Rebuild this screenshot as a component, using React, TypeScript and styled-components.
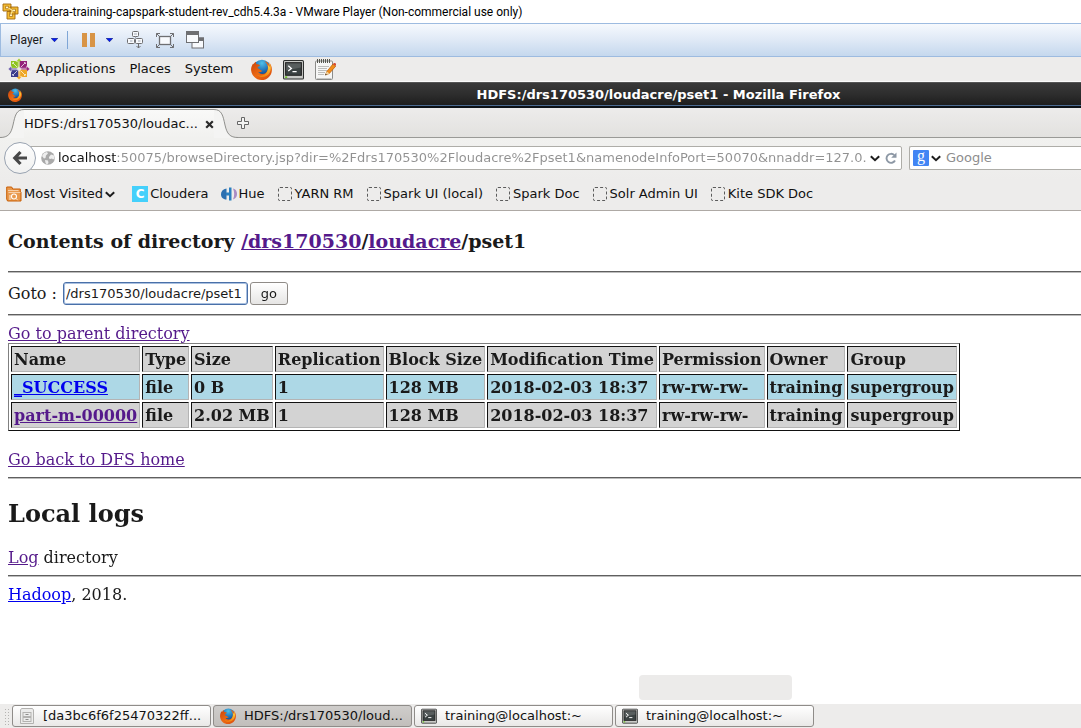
import React from "react";
import styled, { createGlobalStyle, css } from "styled-components";

const ui = `"DejaVu Sans", "Noto Sans", sans-serif`;
const segoe = `Roboto, "Noto Sans", sans-serif`;
const serif = `"DejaVu Serif", "Liberation Serif", serif`;

const GlobalStyle = createGlobalStyle`
  * { box-sizing: border-box; }
  body { margin: 0; background: #fff; color: #1a1a1a; font: 13px/18px ${ui}; }
  button, input { font: inherit; color: inherit; }
  button { cursor: default; }
  svg { display: block; flex: none; }
`;

/* ---------- layout ---------- */

const Screen = styled.div`
  display: flex;
  flex-direction: column;
  min-height: 100vh;
  overflow: hidden;
`;

const HostTitle = styled.header`
  display: flex;
  align-items: center;
  gap: 4px;
  height: 23px;
  padding: 0 2px;
  background: #fff;
  color: #000;
  font: 12px/16px ${segoe};
  white-space: nowrap;
`;

const PlayerBar = styled.div`
  display: flex;
  align-items: center;
  height: 34px;
  padding: 0 9px;
  border: 1px solid #9dbbe0;
  border-right: 0;
  background: linear-gradient(#f6f9fd, #dfe9f6 50%, #c5d8ee);
  font: 12px/16px ${segoe};
`;

const PlainButton = styled.button`
  display: flex;
  align-items: center;
  gap: 8px;
  padding: 0;
  border: 0;
  background: none;
`;

const BarDivider = styled.span`
  width: 1px;
  height: 18px;
  margin: 0 14px 0 9px;
  background: #7fa6d6;
`;

const PauseButton = styled(PlainButton)`
  gap: 11px;
`;

const ToolIcons = styled.div`
  display: flex;
  align-items: center;
  gap: 12px;
  margin-left: 14px;
`;

const GnomePanel = styled.nav`
  display: flex;
  align-items: center;
  height: 25px;
  padding: 0 8px;
  gap: 14px;
  background: #edeceb;
  border-bottom: 1px solid #fafafa;
  color: #111;
`;

const MainMenu = styled(PlainButton)`
  gap: 6px;
`;

const Launchers = styled.div`
  display: flex;
  align-items: center;
  gap: 11px;
  margin-left: 4px;
`;

const WindowTitle = styled.div`
  display: flex;
  align-items: center;
  height: 26px;
  padding-left: 8px;
  border-top: 1px solid #555;
  border-bottom: 2px solid #0c1117;
  background: linear-gradient(#393939, #2d2d2d 50%, #1c1c1c);
  box-shadow: inset 0 -1px #4b6a90;
  color: #fff;
  font-weight: bold;
`;

const WindowName = styled.h1`
  flex: 1;
  margin: 0;
  padding-left: 214px;
  font-size: 13px;
  line-height: 18px;
  text-align: center;
  white-space: nowrap;
`;

const TabStrip = styled.div`
  display: flex;
  height: 30px;
  background: linear-gradient(#edeceb, #e2e1df);
  box-shadow: inset 0 -1px #9a9a97;
`;

const Tab = styled.div`
  display: flex;
  padding-top: 1px;
`;

const TabBody = styled.div`
  display: flex;
  align-items: center;
  gap: 7px;
  border-top: 1px solid #90908d;
  background: linear-gradient(#f9f9f8, #f1f1ef);
  color: #111;
  white-space: nowrap;
`;

const NewTab = styled(PlainButton)`
  margin-left: -3px;
  padding: 2px;
`;

const NavBar = styled.div`
  display: flex;
  align-items: center;
  height: 42px;
  padding: 0 0 2px 4px;
  background: linear-gradient(#f1f1ef, #edeceb);
`;

const BackButton = styled.button`
  display: flex;
  align-items: center;
  justify-content: center;
  flex: none;
  z-index: 1;
  width: 32px;
  height: 32px;
  padding: 0;
  border: 1px solid #99a3b1;
  border-radius: 50%;
  background: linear-gradient(#fdfdfd, #f1f1f0);
`;

const Field = styled.div`
  display: flex;
  align-items: center;
  min-width: 0;
  height: 24px;
  border: 1px solid #aeada8;
  background: #fff;
`;

const UrlField = styled(Field)`
  flex: 1;
  margin: 0 7px 0 -6px;
  padding: 0 4px 0 10px;
  border-radius: 0 2px 2px 0;
`;

const SearchField = styled(Field)`
  flex: 0 0 172px;
  padding-left: 3px;
  border-right: 0;
  border-radius: 2px 0 0 2px;
`;

const bareInput = css`
  flex: 1;
  min-width: 0;
  padding: 0;
  border: 0;
  outline: 0;
  background: none;
`;

const UrlInput = styled.input`
  ${bareInput}
  margin: 0 4px 0 3px;
  background: linear-gradient(to right, #111 58px, #919191 58px);
  -webkit-background-clip: text;
  background-clip: text;
  color: transparent;
`;

const SearchInput = styled.input`
  ${bareInput}
  margin-left: 5px;
  &::placeholder { color: #8d8d8d; opacity: 1; }
`;

const SearchEngine = styled(PlainButton)`
  gap: 2px;
`;

const UrlTools = styled.div`
  display: flex;
  align-items: center;
  gap: 5px;
`;

const LetterIcon = styled.span<{ $bg: string; $serif?: boolean }>`
  flex: none;
  width: 16px;
  height: 16px;
  border-radius: ${(p) => (p.$serif ? "1px" : "0")};
  background: ${(p) => p.$bg};
  color: #fff;
  font: ${(p) => (p.$serif ? `16px/12px "Liberation Serif", serif` : `bold 12px/16px ${ui}`)};
  text-align: center;
`;

const Bookmarks = styled.nav`
  display: flex;
  align-items: center;
  gap: 12px;
  height: 31px;
  padding: 0 6px 2px;
  border-bottom: 1px solid #aea9a5;
  background: #edeceb;
  white-space: nowrap;
`;

const Bookmark = styled.a`
  display: flex;
  align-items: center;
  gap: 2px;
  color: #111;
  text-decoration: none;
`;

const FolderMark = styled(PlainButton)`
  gap: 2px;
  margin-right: 5px;
  color: #111;
`;

const Blank = styled.span`
  width: 14px;
  height: 14px;
  margin: 0 1px;
  border: 1px dashed #5c5c5c;
  border-radius: 2px;
`;

const Page = styled.main`
  flex: 1;
  padding: 0 0 8px 8px;
  font: 16px/19px ${serif};
`;

const DirHeading = styled.h2`
  margin: 19px 0;
  font-size: 19px;
  line-height: 22px;
`;

const Rule = styled.hr`
  height: 2px;
  margin: 0;
  border: 0;
  border-top: 1px solid #5f5f5f;
  background: #bdbdbd;
`;

const GotoForm = styled.form`
  display: flex;
  align-items: center;
  padding: 9px 0;
`;

const GotoInput = styled.input`
  width: 185px;
  height: 23px;
  margin: 0 2px 0 6px;
  padding: 0 2px;
  border: 1px solid #4a70a8;
  border-radius: 3px;
  outline: 0;
  box-shadow: inset 0 0 0 1px #a9c0e0;
  font: 13px/18px ${ui};
`;

const GoButton = styled.button`
  width: 38px;
  height: 23px;
  padding: 0;
  border: 1px solid #8f8b87;
  border-radius: 3px;
  background: linear-gradient(#fff, #e6e5e4);
  font: 13px/18px ${ui};
`;

const Link = styled.a<{ $fresh?: boolean }>`
  color: ${(p) => (p.$fresh ? "#0000ee" : "#551a8b")};
`;

const Line = styled.p<{ $before?: number; $after?: number }>`
  margin: ${(p) => p.$before ?? 8}px 0 ${(p) => p.$after ?? 8}px;
`;

const Listing = styled.table`
  border: 1px solid #111;
  border-top-color: #808080;
  border-left-color: #808080;
  border-spacing: 2px;
  font-weight: bold;
  line-height: 20px;
  white-space: nowrap;
`;

const Row = styled.tr<{ $bg: string }>`
  background: ${(p) => p.$bg};
`;

const cell = css`
  padding: 3px 2px 1px;
  border: 1px solid #b4b4b4;
  border-top-color: #111;
  border-left-color: #111;
  text-align: left;
`;
const HeadCell = styled.th`${cell}`;
const Cell = styled.td`${cell}`;

const LogsHeading = styled.h2`
  margin: 20px 0;
  font-size: 24px;
  line-height: 29px;
`;

const Taskbar = styled.footer`
  position: relative;
  display: flex;
  align-items: center;
  gap: 2px;
  height: 24px;
  padding: 0 4px;
  background: #edeceb;
`;

const Grip = styled.span`
  width: 6px;
  height: 17px;
  background: radial-gradient(circle, #b5b4b2 1px, transparent 1px) 0 0 / 3px 3px;
`;

const Task = styled.button<{ $active?: boolean }>`
  display: flex;
  align-items: center;
  gap: 8px;
  flex: 0 1 199px;
  height: 22px;
  padding: 0 6px;
  border: 1px solid #8f8c89;
  border-radius: 3px;
  background: ${(p) =>
    p.$active ? "linear-gradient(#cfcdcb, #c1bebb)" : "linear-gradient(#fff, #e9e8e7)"};
  color: #111;
  white-space: nowrap;
`;

const StatusBubble = styled.div`
  position: absolute;
  bottom: 28px;
  left: 639px;
  width: 153px;
  height: 25px;
  border-radius: 4px;
  background: #ecebea;
`;

/* ---------- icons ---------- */

const FirefoxIcon = ({ size }: { size: number }) => (
  <svg width={size} height={size} viewBox="0 0 20 20">
    <defs>
      <radialGradient id="globe" cx="50%" cy="20%" r="75%">
        <stop offset="0" stopColor="#4fc0e8" />
        <stop offset="0.6" stopColor="#1d6cb4" />
        <stop offset="1" stopColor="#113a78" />
      </radialGradient>
      <linearGradient id="fox" x1="0" y1="0" x2="1" y2="1">
        <stop offset="0" stopColor="#c8420c" />
        <stop offset="0.5" stopColor="#ec6a13" />
        <stop offset="1" stopColor="#d94a0c" />
      </linearGradient>
      <linearGradient id="flame" x1="0" y1="0" x2="0" y2="1">
        <stop offset="0" stopColor="#ffe14a" />
        <stop offset="1" stopColor="#f0820f" />
      </linearGradient>
    </defs>
    <circle cx="10.4" cy="9" r="8.4" fill="url(#globe)" />
    <path d="M2 4.2C.7 6-.1 8.600 .1 10.800 .6 16 4.900 20 10 20c5.300 0 9.700-4 9.900-9.400.1-2.900-.8-5.400-2.600-7.200.5 1.300.6 2.300.6 3.200C16.800 3.800 15 2.600 13 2.200c3 2.400 3.700 6 2.700 8.700-.9 2.400-3 3.600-5.200 3.400-1.700-.1-3-.9-3.700-2.100 1.500.7 2.900.2 4.300-.9-1.200-.1-1.700-.4-2.600-1.300-.9-.9-2-.9-2.300-1.700.1-.8 1.700-1.200 2.500-2.300-1-.7-2-.9-3.200-.9-.7-.3-.9-1.500-.8-2.500C3.700 3 3 3.800 2.700 4.900z" fill="url(#fox)" />
    <path d="M17.300 3.400c2.800 4.500 1.700 10-2.300 12.600-3 1.900-7 1.500-9.200-.7 3 1.200 6.600.6 8.600-2 1.800-2.300 2.200-5 1.500-7.800.9.700 1.500 1.600 1.800 2.400.2-1.600.1-3-.4-4.500z" fill="url(#flame)" />
  </svg>
);

const TerminalIcon = ({ size }: { size: number }) => (
  <svg width={size} height={size} viewBox="0 0 20 20">
    <rect x=".5" y="1.500" width="19" height="17.500" rx="1" fill="#c9cac7" stroke="#2d2f2e" />
    <rect x="2.500" y="3.500" width="15" height="12" fill="#3b4242" stroke="#222" />
    <path d="M3 4h14v4L3 11z" fill="#fff" opacity=".15" />
    <path d="M5 6.500l3 2.500-3 2.500M9 12h4" fill="none" stroke="#fff" strokeWidth="1.200" />
    <path d="M2 17.300h2" stroke="#62c414" strokeWidth="1.400" />
  </svg>
);

const NotepadIcon = () => (
  <svg width="21" height="21" viewBox="0 0 21 21">
    <rect x=".5" y="2" width="17" height="18.500" rx="1" fill="#f6f6f5" stroke="#8c8c8a" />
    <path d="M1.500 19.500h15" stroke="#c6c6c4" />
    <path d="M2.500 0v4M4.500 0v4M6.500 0v4M8.500 0v4M10.500 0v4M12.500 0v4M14.500 0v4" stroke="#56574f" />
    <path d="M3 7.500h11M3 9.500h9M3 11.500h9M3 13.500h7M3 15.500h6" stroke="#bdbdbb" />
    <path d="M10.500 16l1.300-3.500L18 5l2.700 2.200-6.400 7.300z" fill="#f28d1a" stroke="#b45a08" strokeWidth=".7" />
    <path d="M18 5l1-1c1-.5 2.600.8 2 2l-.6 1z" fill="#d7482f" />
    <path d="M10.500 16l1.300-3.500 2.500 2z" fill="#efd6a4" />
    <path d="M10.200 16.300l.5-1.600 1.200 1z" fill="#222" />
  </svg>
);

const quarters = [
  { turn: 0, square: "#8fc31f", arrow: "#a4cc35" },
  { turn: 90, square: "#932279", arrow: "#932279" },
  { turn: 180, square: "#efa724", arrow: "#efa724" },
  { turn: 270, square: "#3a3a8c", arrow: "#6a5aa8" },
];

const CentosIcon = () => (
  <svg width="22" height="22" viewBox="-11 -11 22 22">
    {quarters.map((q) => (
      <g key={q.turn} transform={`rotate(${q.turn})`}>
        <rect x="-8" y="-8" width="7.200" height="7.200" fill={q.square} />
        <path d="M-7-5L-5-7M-6.500-6.500l5 5" stroke="#fff" strokeWidth=".7" />
        <path d="M0-10.800l3 3.300H.8V-2H-.8v-5.500H-3z" fill={q.arrow} stroke="#fff" strokeWidth=".4" />
      </g>
    ))}
  </svg>
);

const VmwareIcon = () => (
  <svg width="17" height="17" viewBox="0 0 17 17">
    <g fill="#f6bd31" stroke="#a26a10" strokeWidth=".9">
      <path d="M1 1h8v7H1zM8 4h8v7H8zM5 8.500h8V16H5z" />
    </g>
    <path d="M3.500 3.200h3v2.500h-3zM10.500 6.200h3v2.500h-3zM7.500 11h3v2.500h-3z" fill="#fff3c4" stroke="#a26a10" strokeWidth=".7" />
    <path d="M6.500 5l4 2.500L9 11" fill="none" stroke="#fbe08a" strokeWidth="1.300" />
  </svg>
);

const DownArrow = () => (
  <svg width="7" height="4" viewBox="0 0 7 4">
    <path d="M.2.300h6.600L3.500 3.800z" fill="#0018ff" stroke="#001070" strokeWidth=".6" />
  </svg>
);

const PauseIcon = () => (
  <svg width="13" height="14" viewBox="0 0 13 14">
    <path d="M0 0h5v14H0zM8 0h5v14H8z" fill="#d89446" />
  </svg>
);

const SendKeysIcon = () => (
  <svg width="17" height="18" viewBox="0 0 17 18" fill="#f8fafd" stroke="#6e6f72">
    <rect x="5.500" y=".5" width="6" height="5" rx="1" />
    <rect x=".5" y="7.500" width="7" height="5" rx="1" />
    <rect x="8.500" y="7.500" width="7" height="5" rx="1" />
    <path d="M8.500 5.500v2M3 10h2.500M11 10h2.500M7 3h3" stroke="#a0a9b6" />
    <path d="M11.500 12.500v4.500M9.500 15l2 2 2-2" fill="none" />
  </svg>
);

const FullScreenIcon = () => (
  <svg width="18" height="15" viewBox="0 0 18 15" fill="none" stroke="#6e6f72">
    <rect x="3.500" y="3.500" width="11" height="8" fill="#f8fafd" strokeWidth="1.300" />
    <path d="M.5 4V.5H4M14 .5h3.500V4M17.500 11v3.500H14M4 14.500H.5V11M.5.500l3 3M17.500.500l-3 3M17.500 14.500l-3-3M.5 14.500l3-3" />
  </svg>
);

const UnityIcon = () => (
  <svg width="18" height="18" viewBox="0 0 18 18">
    <rect x="6" y="7" width="11.500" height="10" fill="#f8fafd" stroke="#6e6f72" />
    <path d="M6 6.500h12V10H6z" fill="#6e6f72" />
    <rect x=".5" y=".5" width="12" height="11" fill="#f8fafd" stroke="#6e6f72" />
    <path d="M0 0h13v4H0z" fill="#6e6f72" />
  </svg>
);

const TabEdge = ({ flip }: { flip?: boolean }) => (
  <svg width="24" height="29" viewBox="0 0 24 29" transform={flip ? "scale(-1 1)" : undefined}>
    <path d="M0 28.500C8 28.500 11 25 13 16S16 .5 24 .5V29H0z" fill="#f4f4f3" />
    <path d="M0 28.500C8 28.500 11 25 13 16S16 .5 24 .5" fill="none" stroke="#90908d" />
  </svg>
);

const CloseIcon = () => (
  <svg width="9" height="9" viewBox="0 0 9 9">
    <path d="M1.200 1.200l6.600 6.600M7.800 1.200L1.200 7.800" stroke="#2b2b2b" strokeWidth="2.200" />
  </svg>
);

const PlusIcon = () => (
  <svg width="12" height="12" viewBox="0 0 12 12">
    <path d="M4.500.500h3v4h4v3h-4v4h-3v-4h-4v-3h4z" fill="#f4f4f3" stroke="#666" />
  </svg>
);

const BackIcon = () => (
  <svg width="16" height="16" viewBox="0 0 16 16">
    <path d="M8.500 2L2.800 8l5.700 6M3.500 8H15" fill="none" stroke="#484848" strokeWidth="3.200" />
  </svg>
);

const GlobeIcon = () => (
  <svg width="14" height="14" viewBox="0 0 14 14">
    <circle cx="7" cy="7" r="6.800" fill="#a9a9a9" />
    <path d="M1 5l2-3 3-1 1 1.500-2 2L4.500 7 3 7.500zM8 6l2-2.500 3 1 .5 3-1.500 1-1-1-1.500.500L8 7.500zM4 9l3 .5L7.500 12 6 13.500 4.500 12z" fill="#ededed" />
  </svg>
);

const Chevron = () => (
  <svg width="10" height="7" viewBox="0 0 10 7">
    <path d="M.8 1.200L5 5.200l4.200-4" fill="none" stroke="#1c1c1c" strokeWidth="2" />
  </svg>
);

const ReloadIcon = () => (
  <svg width="12" height="12" viewBox="0 0 12 12">
    <path d="M9.300 3.200A4.500 4.500 0 1 0 10 8.500" fill="none" stroke="#8d98a5" strokeWidth="1.900" />
    <path d="M11.500.500v5.300H6.200z" fill="#8d98a5" />
  </svg>
);

const FolderIcon = () => (
  <svg width="16" height="16" viewBox="0 0 16 16" fill="none">
    <path d="M.7 1h5l1 2h7.600v3H15v9H1.500L.7 13z" fill="#e9994d" stroke="#c95f07" />
    <path d="M2 4.500h10.500M2.500 6.500h12" stroke="#f9dcbf" strokeWidth=".8" />
    <circle cx="8" cy="10.500" r="2.500" stroke="#fff" strokeWidth="1.100" />
    <path d="M9.800 12.300l2 2M4 14V9" stroke="#fbe6d0" />
  </svg>
);

const HueIcon = () => (
  <svg width="16" height="14" viewBox="0 0 16 14">
    <path d="M5.500 1.500v11C1.800 12.500 0 10 0 7.200S1.800 2 5.500 1.500z" fill="#2b6fb0" />
    <path d="M5 5.500h5v3H5zM8 .5h2.500v13H8z" fill="#2b7fc0" />
    <path d="M12 1.500C15 2 16 4.500 16 7s-1 4.600-4 5.500c1.600-3.600 1.600-7.400 0-11z" fill="#a98cc4" />
  </svg>
);

const DrawerIcon = () => (
  <svg width="16" height="16" viewBox="0 0 16 16" fill="#ececeb" stroke="#b3b2b0">
    <path d="M2.500.500h11l1 1.500v13.500h-13V2z" />
    <rect x="4" y="4.500" width="8" height="4" />
    <rect x="4" y="9.500" width="8" height="4" />
    <path d="M6.500 6.500h3M6.500 11.500h3" stroke="#8f8e8c" />
  </svg>
);

/* ---------- data ---------- */

const columns = ["Name", "Type", "Size", "Replication", "Block Size", "Modification Time", "Permission", "Owner", "Group"];

const files = [
  { name: "_SUCCESS", size: "0 B", fresh: true, bg: "#add8e6" },
  { name: "part-m-00000", size: "2.02 MB", fresh: false, bg: "#d3d3d3" },
];

const plainBookmarks = ["YARN RM", "Spark UI (local)", "Spark Doc", "Solr Admin UI", "Kite SDK Doc"];

const pageUrl =
  "localhost:50075/browseDirectory.jsp?dir=%2Fdrs170530%2Floudacre%2Fpset1&namenodeInfoPort=50070&nnaddr=127.0.0.1:8020";

export default function App() {
  return (
    <Screen>
      <GlobalStyle />
      <HostTitle>
        <VmwareIcon />
        cloudera-training-capspark-student-rev_cdh5.4.3a - VMware Player (Non-commercial use only)
      </HostTitle>
      <PlayerBar>
        <PlainButton>Player <DownArrow /></PlainButton>
        <BarDivider />
        <PauseButton aria-label="Pause"><PauseIcon /><DownArrow /></PauseButton>
        <ToolIcons>
          <PlainButton aria-label="Send keys"><SendKeysIcon /></PlainButton>
          <PlainButton aria-label="Full screen"><FullScreenIcon /></PlainButton>
          <PlainButton aria-label="Unity"><UnityIcon /></PlainButton>
        </ToolIcons>
      </PlayerBar>

      <GnomePanel>
        <MainMenu><CentosIcon />Applications</MainMenu>
        <MainMenu>Places</MainMenu>
        <MainMenu>System</MainMenu>
        <Launchers>
          <PlainButton aria-label="Firefox"><FirefoxIcon size={21} /></PlainButton>
          <PlainButton aria-label="Terminal"><TerminalIcon size={21} /></PlainButton>
          <PlainButton aria-label="Text editor"><NotepadIcon /></PlainButton>
        </Launchers>
      </GnomePanel>

      <WindowTitle>
        <FirefoxIcon size={14} />
        <WindowName>HDFS:/drs170530/loudacre/pset1 - Mozilla Firefox</WindowName>
      </WindowTitle>

      <TabStrip>
        <Tab>
          <TabEdge />
          <TabBody>
            HDFS:/drs170530/loudac...
            <PlainButton aria-label="Close tab"><CloseIcon /></PlainButton>
          </TabBody>
          <TabEdge flip />
        </Tab>
        <NewTab aria-label="New tab"><PlusIcon /></NewTab>
      </TabStrip>

      <NavBar>
        <BackButton aria-label="Back"><BackIcon /></BackButton>
        <UrlField>
          <GlobeIcon />
          <UrlInput aria-label="Address" defaultValue={pageUrl} />
          <UrlTools>
            <PlainButton aria-label="History"><Chevron /></PlainButton>
            <PlainButton aria-label="Reload"><ReloadIcon /></PlainButton>
          </UrlTools>
        </UrlField>
        <SearchField>
          <SearchEngine aria-label="Search engine">
            <LetterIcon $bg="#4285f4" $serif>g</LetterIcon>
            <Chevron />
          </SearchEngine>
          <SearchInput aria-label="Search" placeholder="Google" />
        </SearchField>
      </NavBar>

      <Bookmarks>
        <FolderMark><FolderIcon />Most Visited<Chevron /></FolderMark>
        <Bookmark href="#cloudera"><LetterIcon $bg="#45d0fb">C</LetterIcon>Cloudera</Bookmark>
        <Bookmark href="#hue"><HueIcon />Hue</Bookmark>
        {plainBookmarks.map((label) => (
          <Bookmark key={label} href="#bookmark"><Blank />{label}</Bookmark>
        ))}
      </Bookmarks>

      <Page>
        <DirHeading>
          Contents of directory <Link href="#drs">/drs170530</Link>/<Link href="#loudacre">loudacre</Link>/pset1
        </DirHeading>
        <Rule />
        <GotoForm onSubmit={(e) => e.preventDefault()}>
          <label htmlFor="goto">Goto :</label>
          <GotoInput id="goto" defaultValue="/drs170530/loudacre/pset1" autoFocus />
          <GoButton>go</GoButton>
        </GotoForm>
        <Rule />
        <Line $after={0}><Link href="#parent">Go to parent directory</Link></Line>
        <Listing>
          <thead>
            <Row $bg="#d3d3d3">
              {columns.map((c) => <HeadCell key={c}>{c}</HeadCell>)}
            </Row>
          </thead>
          <tbody>
            {files.map((f) => (
              <Row key={f.name} $bg={f.bg}>
                <Cell><Link href="#file" $fresh={f.fresh}>{f.name}</Link></Cell>
                <Cell>file</Cell>
                <Cell>{f.size}</Cell>
                <Cell>1</Cell>
                <Cell>128 MB</Cell>
                <Cell>2018-02-03 18:37</Cell>
                <Cell>rw-rw-rw-</Cell>
                <Cell>training</Cell>
                <Cell>supergroup</Cell>
              </Row>
            ))}
          </tbody>
        </Listing>
        <Line $before={19}><Link href="#home">Go back to DFS home</Link></Line>
        <Rule />
        <LogsHeading>Local logs</LogsHeading>
        <Line><Link href="#log">Log</Link> directory</Line>
        <Rule />
        <Line><Link href="#hadoop" $fresh>Hadoop</Link>, 2018.</Line>
      </Page>

      <Taskbar>
        <Grip />
        <Task><DrawerIcon />[da3bc6f6f25470322ff...</Task>
        <Task $active><FirefoxIcon size={16} />HDFS:/drs170530/loud...</Task>
        <Task><TerminalIcon size={16} />training@localhost:~</Task>
        <Task><TerminalIcon size={16} />training@localhost:~</Task>
        <StatusBubble />
      </Taskbar>
    </Screen>
  );
}
